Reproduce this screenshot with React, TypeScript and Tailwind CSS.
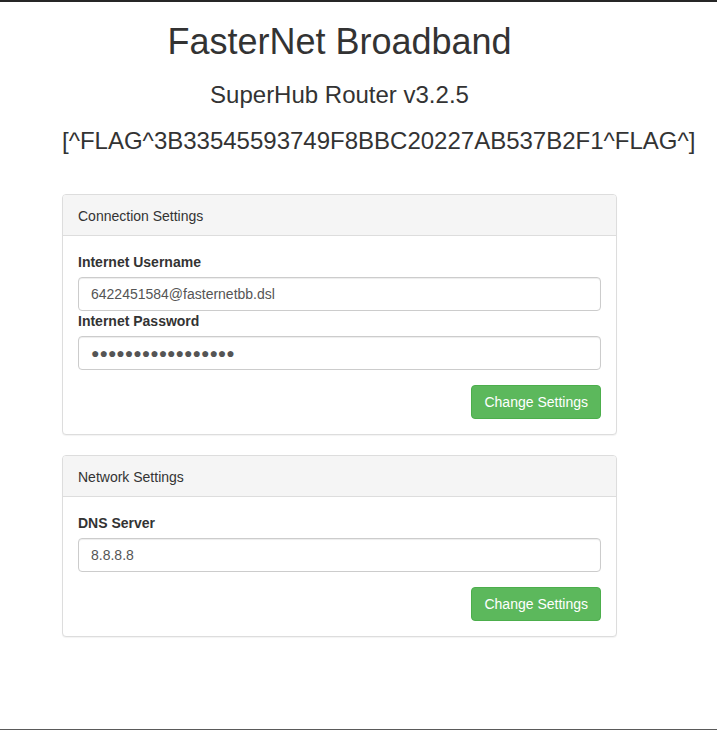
import React from 'react';

const font = { fontFamily: '"Liberation Sans", Arial, Helvetica, sans-serif' };

const Field = ({ label, value }: { label: string; value: string }) => (
  <div>
    <label className="block mb-[5px] text-[14px] leading-[20px] font-bold text-[#333]">{label}</label>
    <input
      type="text"
      readOnly
      defaultValue={value}
      className="block w-full h-[34px] px-[12px] py-[6px] text-[14px] leading-[20px] text-[#555] bg-white border border-[#ccc] rounded-[4px] shadow-[inset_0_1px_1px_rgba(0,0,0,0.075)] outline-none"
    />
  </div>
);

const SaveButton = () => (
  <div className="flex justify-end mt-[15px]">
    <button className="h-[34px] px-[12px] text-[14px] leading-[20px] text-white bg-[#5cb85c] border border-[#4cae4c] rounded-[4px]">
      Change Settings
    </button>
  </div>
);

const Panel = ({ title, children }: { title: string; children: React.ReactNode }) => (
  <div className="mb-[20px] bg-white border border-[#ddd] rounded-[4px] shadow-[0_1px_1px_rgba(0,0,0,0.05)]">
    <div className="px-[15px] pt-[11px] pb-[9px] bg-[#f5f5f5] border-b border-[#ddd] rounded-t-[3px] text-[14px] leading-[20px] text-[#333]">
      {title}
    </div>
    <div className="px-[15px] pt-[16px] pb-[15px]">{children}</div>
  </div>
);

export default function App() {
  return (
    <div
      className="h-[730px] overflow-hidden bg-white border-t-2 border-t-[#262626] border-b border-b-[#5a5a5a]"
      style={font}
    >
      <div className="ml-[62px] w-[555px]">
        <h1 className="mt-[20px] text-center text-[36px] leading-[39.6px] font-normal text-[#333]">
          FasterNet Broadband
        </h1>
        <h3 className="mt-[20px] text-center text-[24px] leading-[26.4px] font-normal text-[#333]">
          SuperHub Router v3.2.5
        </h3>
        <h3 className="mt-[20px] text-center text-[24px] leading-[26.4px] font-normal text-[#333] whitespace-nowrap">
          [^FLAG^3B33545593749F8BBC20227AB537B2F1^FLAG^]
        </h3>

        <div className="mt-[40px]">
          <Panel title="Connection Settings">
            <Field label="Internet Username" value="6422451584@fasternetbb.dsl" />
            <Field label="Internet Password" value="●●●●●●●●●●●●●●●●●" />
            <SaveButton />
          </Panel>

          <Panel title="Network Settings">
            <Field label="DNS Server" value="8.8.8.8" />
            <SaveButton />
          </Panel>
        </div>
      </div>
    </div>
  );
}
